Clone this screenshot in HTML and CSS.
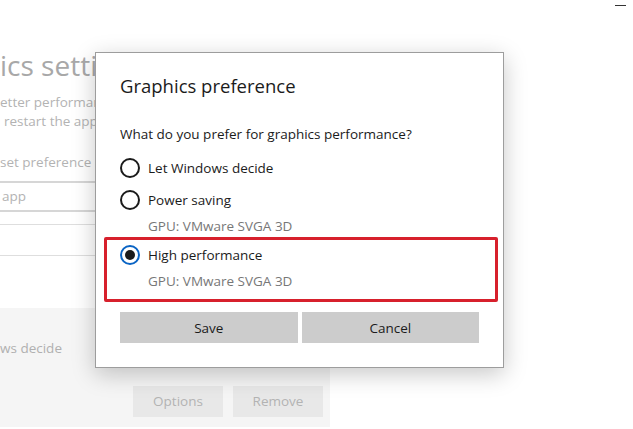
FILE: index.html
```html
<!DOCTYPE html>
<html lang="en">

<head>
    <meta charset="UTF-8">
    <meta name="viewport" content="width=device-width, initial-scale=1.0">
    <title>Graphics preference</title>
    <link rel="stylesheet" href="styles.css">
</head>

<body>
    <!-- settings page behind the dialog -->
    <div class="page">
        <span class="minimize"></span>
        <div class="page-head">
            <h1 class="page-title">ics settin</h1>
            <p class="page-desc">etter performan</p>
            <p class="page-desc indent">restart the app</p>
            <p class="page-label">set preference</p>
            <div class="select">app</div>
            <div class="browse"></div>
        </div>
        <div class="app-item">
            <p class="app-pref">ws decide</p>
            <div class="app-actions">
                <span class="ghost-btn">Options</span>
                <span class="ghost-btn">Remove</span>
            </div>
        </div>
    </div>

    <div class="dialog">
        <h2 class="dialog-title">Graphics preference</h2>
        <p class="question">What do you prefer for graphics performance?</p>

        <label class="option">
            <svg class="radio" width="20" height="20" viewBox="0 0 20 20">
                <circle cx="10" cy="10" r="9" />
            </svg>
            Let Windows decide
        </label>
        <label class="option">
            <svg class="radio" width="20" height="20" viewBox="0 0 20 20">
                <circle cx="10" cy="10" r="9" />
            </svg>
            Power saving
        </label>
        <p class="gpu">GPU: VMware SVGA 3D</p>
        <label class="option checked">
            <svg class="radio" width="20" height="20" viewBox="0 0 20 20">
                <circle cx="10" cy="10" r="9" />
                <circle class="dot" cx="10" cy="10" r="5" />
            </svg>
            High performance
        </label>
        <p class="gpu">GPU: VMware SVGA 3D</p>

        <div class="actions">
            <button class="btn">Save</button>
            <button class="btn">Cancel</button>
        </div>

        <!-- red highlight drawn over the dialog -->
        <div class="highlight"></div>
    </div>
</body>

</html>
```

FILE: styles.css
```css
* {
    box-sizing: border-box;
}

body {
    margin: 0;
    width: 633px;
    height: 429px;
    overflow: hidden;
    background: #fff;
    font-family: "Open Sans", "Noto Sans", sans-serif;
    font-size: 13.5px;
    color: #1b1b1b;
}

p,
h1,
h2 {
    margin: 0;
    font-weight: normal;
}

/* faded page */
.page {
    position: relative;
    height: 100%;
    padding-top: 47px;
}

.minimize {
    position: absolute;
    top: 5px;
    left: 615px;
    width: 11px;
    height: 1px;
    background: #333;
}

/* only the part left of the dialog shows */
.page-head {
    width: 95px;
    overflow: hidden;
    white-space: nowrap;
}

.page-title {
    font-size: 28px;
    line-height: 36px;
    color: #a8a8a8;
}

.page-desc {
    line-height: 19px;
    color: #b3b3b3;
}

.page-title + .page-desc {
    margin-top: 10px;
}

.indent {
    padding-left: 4px;
}

.page-label {
    margin-top: 21px;
    line-height: 20px;
    color: #b3b3b3;
}

.select {
    margin: 9px 0 0 -10px;
    width: 220px;
    height: 31px;
    padding-left: 10px;
    border: 2px solid #d6d6d6;
    line-height: 27px;
    color: #b3b3b3;
}

.browse {
    margin: 12px 0 0 -10px;
    width: 220px;
    height: 32px;
    border: 1px solid #dedede;
}

.app-item {
    margin-top: 52px;
    width: 330px;
    height: 119px;
    padding: 30px 7px 0 0;
    background: #f5f5f5;
}

.app-pref {
    line-height: 20px;
    color: #b0b0b0;
}

.app-actions {
    display: flex;
    justify-content: flex-end;
    gap: 10px;
    margin-top: 28px;
}

.ghost-btn {
    width: 90px;
    height: 31px;
    line-height: 31px;
    text-align: center;
    background: #e8e8e8;
    color: #b3b3b3;
}

/* dialog */
.dialog {
    position: absolute;
    left: 95px;
    top: 52px;
    width: 409px;
    padding: 19px 24px 24px;
    background: #fff;
    border: 1px solid #9d9d9d;
    box-shadow: 0 6px 22px rgba(0, 0, 0, 0.22);
}

.dialog-title {
    font-size: 18.5px;
    line-height: 28px;
}

.question {
    margin-top: 24px;
    line-height: 20px;
}

.option {
    display: flex;
    align-items: center;
    gap: 8px;
    height: 32px;
}

.question + .option {
    margin-top: 8px;
}

.gpu + .option {
    margin-top: 3px;
}

.radio circle {
    fill: none;
    stroke: #1b1b1b;
    stroke-width: 2px;
}

.checked .radio circle {
    stroke: #0a64c4;
}

.checked .radio .dot {
    fill: #1b1b1b;
    stroke: none;
}

.gpu {
    padding-left: 28px;
    line-height: 20px;
    color: #777;
}

.actions {
    display: flex;
    gap: 4px;
    margin-top: 21px;
}

.btn {
    flex: 1;
    height: 31px;
    border: none;
    background: #cccccc;
    font: inherit;
    color: #1b1b1b;
}

.highlight {
    position: absolute;
    left: 8px;
    top: 184px;
    width: 394px;
    height: 65px;
    border: 3px solid #d7202c;
    border-radius: 2px;
}
```
